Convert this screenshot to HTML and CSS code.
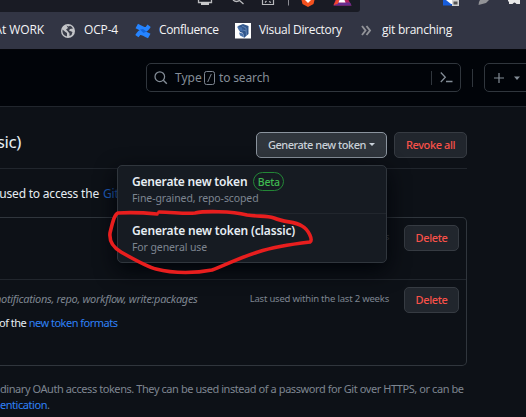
FILE: index.html
```html
<!DOCTYPE html>
<html lang="en">
<head>
<meta charset="utf-8">
<title>Personal access tokens (classic)</title>
<link rel="stylesheet" href="styles.css">
</head>
<body>
<div class="toolbar">
  <div class="address">
    <svg class="tool-icons" width="170" height="12" viewBox="190 0 170 12">
      <path d="M198.500 0v2.500h13V0" fill="none" stroke="#b9babd" stroke-width="1.300"/><path d="M201 2h8v3h-8z" fill="#c8c9cb"/>
      <path d="M233 0q3.500 3 7 0M239.500 0.500l4 3.500" fill="none" stroke="#b9babd" stroke-width="1.300"/>
      <path d="M262.500 0v4.500h11V0M265 2.500l1.500-1.500M269 1.500l2 1" fill="none" stroke="#b9babd" stroke-width="1.200"/>
      <path d="M288.500 0v5.500" stroke="#8b8c93"/>
      <path d="M301.500 0h13l-1 4-5.500 3-5.500-3z" fill="#f4511e"/><path d="M305 0h6l-3 3z" fill="#fff"/>
      <path d="M335.500 0h13l3 5.500h-18z" fill="#b6245f"/><path d="M333.500 5.500l3.500-3h13l1.500 3z" fill="#662d91"/><path d="M333.500 5l3-5h3l-2 4z" fill="#f4472c"/><path d="M339.500 0h5l1 2.500h-7z" fill="#fff"/>
    </svg>
  </div>
  <svg class="ext-icons" width="166" height="12" viewBox="360 0 166 12">
    <path d="M443 0h15v5.500h-15z" fill="#175ddc"/><path d="M446 0h7v4h-2z" fill="#fff"/><path d="M452 0h7v6h-7z" fill="#d2d2d2"/><path d="M453.500 1.500h4v3h-4z" fill="#555"/>
    <path d="M480 0h9l-3 3-7.500 2 .5-3z" fill="#929397"/>
    <path d="M508 0h12v4h-3.500q-2-3-4 0H509V1.500h-1z" fill="#e8e8e8"/>
  </svg>
</div>
<nav class="bookmarks">
  <span class="bm bm-work">At WORK</span>
  <svg class="i-globe" width="14" height="14" viewBox="0 0 14 14"><circle cx="7" cy="7" r="7" fill="#c3c4c8"/><path d="M1.500 5.500l3 2.500 1.500 1v3.500Q2 11.500 1.500 8zM5.500 1.500l2 1 1.500-.7q2 .7 3 2.700l-3 .5-1 1.500 3.500 1.500-1 3-2 1v-2.500L6.500 7 5 5.500 7 4z" fill="#3b3e4b"/></svg>
  <span class="bm bm-ocp">OCP-4</span>
  <svg class="i-conf" width="16" height="16" viewBox="0 0 16 16"><path d="M.3 12q4-7 8.500-4.500L15.500 10.700 13 15.300Q6 11.500 5.300 12L3.500 14.200z" fill="#2684ff"/><path d="M15.700 4q-4 7-8.500 4.500L.5 5.300 3 .7Q10 4.500 10.700 4l1.800-2.500z" fill="#2684ff"/><path d="M5 6.500l3-.5 3.500 2.500-3 1.500z" fill="#1265dc"/></svg>
  <span class="bm bm-conf">Confluence</span>
  <svg class="i-vis" width="16" height="16" viewBox="0 0 16 16"><path d="M0 0h16v15.500H0z" fill="#fff"/><path d="M3 3l5-2 5.500 2v8L9 15l-1-5-3-1z" fill="#31568c"/><path d="M2 3.500l5 1 1 4-4-1zM4 9.500l4 1 1 4-4-2z" fill="#4871ab"/><path d="M7 3l4 2 .5 8M8 7l3 1" fill="none" stroke="#7d9dc7" stroke-width=".6"/></svg>
  <span class="bm bm-vis">Visual Directory</span>
  <svg class="i-chev" width="11" height="11" viewBox="0 0 11 11"><path d="M1 1l3.500 4.500L1 10M5.500 1L9 5.500 5.500 10" fill="none" stroke="#929399" stroke-width="1.900"/></svg>
  <span class="bm bm-git">git branching</span>
</nav>
<header class="header">
  <div class="search">
    <svg class="i-search" width="14" height="14" viewBox="0 0 14 14"><circle cx="5.800" cy="5.700" r="4.800" fill="none" stroke="#848d97" stroke-width="1.250"/><path d="M9.300 9.300l3.500 3.500" stroke="#848d97" stroke-width="1.400"/></svg>
    <span class="ph ph-type">Type</span>
    <svg class="i-key" width="11" height="14" viewBox="0 0 11 14"><rect x=".5" y=".5" width="10" height="13" rx="2" fill="none" stroke="#7d8590"/><path d="M3.700 11L7.300 3" stroke="#7d8590"/></svg>
    <span class="ph ph-to">to search</span>
    <span class="search-sep"></span>
    <svg class="i-term" width="13" height="11" viewBox="0 0 13 11"><path d="M.8.500L5.300 5.300.8 10M6 9.500h6.500" fill="none" stroke="#848d97" stroke-width="1.300"/></svg>
  </div>
  <span class="header-sep"></span>
  <div class="create">
    <svg width="32" height="12" viewBox="0 0 32 12"><path d="M6 1v10M1 6h10" stroke="#848d97" stroke-width="1.200"/><path d="M21 4.500h6L24 8z" fill="#848d97"/></svg>
  </div>
</header>
<main class="page">
  <div class="title-row">
    <div class="title"><span>sic)</span></div>
    <div class="btn btn-gen"><span>Generate new token</span><i class="caret"></i></div>
    <div class="btn btn-revoke"><span>Revoke all</span></div>
  </div>
  <div class="intro"><span class="intro-a">used to access the</span><span class="intro-b">Git</span></div>
  <section class="tokens">
    <div class="row row-one"><span class="used used-s">s</span><div class="btn btn-delete"><span>Delete</span></div></div>
    <div class="row row-two">
      <div class="details">
        <div class="scopes">notifications, repo, workflow, write:packages</div>
        <div class="formats"><span class="of">of the</span> <span class="link">new token formats</span></div>
      </div>
      <span class="used">Last used within the last 2 weeks</span>
      <div class="btn btn-delete"><span>Delete</span></div>
    </div>
  </section>
  <footer class="note">
    <div class="note-line">dinary OAuth access tokens. They can be used instead of a password for Git over HTTPS, or can be</div>
    <div class="note-line note-b"><span class="link">entication</span>.</div>
  </footer>
</main>
<div class="menu">
  <div class="item item-one">
    <div class="item-head"><span class="item-title">Generate new token</span><span class="beta">Beta</span></div>
    <div class="item-sub">Fine-grained, repo-scoped</div>
  </div>
  <div class="item item-two">
    <div class="item-head"><span class="item-title title-classic">Generate new token (classic)</span></div>
    <div class="item-sub">For general use</div>
  </div>
</div>
<svg class="scribble" width="210" height="68" viewBox="105 207 210 68"><path d="M157 214Q136 212 118 213C114 214 112 225 110 233C109 242 114 248 121 252C135 260 147 267 156 269C175 274 197 273 212 270C227 264 242 257 258 252C276 246 293 244 310 242C313 240 309 230 302 226C294 221 286 223 274 218C266 215 259 217 247 215C231 211 204 211 195 213C184 214 172 212 159 212" fill="none" stroke="#e81e1e" stroke-width="3.600" stroke-linecap="round" stroke-linejoin="round"/></svg>
</body>
</html>
```
FILE: styles.css
```css
* { box-sizing: border-box; }
body { margin: 0; width: 526px; height: 417px; overflow: hidden; position: relative; background: #0d1117; color: #e6edf3; font-family: "Noto Sans", sans-serif; font-size: 11px; white-space: nowrap; }
svg { display: block; flex: none; }
span { flex: none; }
.toolbar { display: flex; height: 12px; background: #323544; }
.address { display: flex; justify-content: flex-end; width: 360px; height: 12px; background: #191b24; border-bottom-right-radius: 3px; }
.bookmarks { display: flex; align-items: center; height: 38px; background: #323544; border-bottom: 1px solid #05060a; font-family: "Open Sans", sans-serif; font-size: 12px; color: #f4f4f6; }
.bm { line-height: 16px; margin-top: -1px; }
.bm-work { display: flex; justify-content: flex-end; width: 44px; letter-spacing: -.1px; }
.i-globe { margin-left: 17px; }
.bm-ocp { margin-left: 9px; width: 51px; letter-spacing: -.15px; }
.bm-conf { margin-left: 8px; width: 76px; letter-spacing: -.35px; }
.bm-vis { margin-left: 8px; width: 102px; letter-spacing: -.3px; }
.bm-git { margin-left: 10px; letter-spacing: -.25px; }
.header { display: flex; align-items: flex-start; height: 57px; padding: 13px 0 0 146px; background: #010409; border-bottom: 1px solid #21262d; }
.search { display: flex; align-items: center; flex: none; width: 315px; height: 29px; border: 1px solid #30363d; border-radius: 5px; }
.i-search { margin-left: 7px; }
.ph { color: #848d97; font-size: 12px; line-height: 16px; margin-top: 1px; }
.ph-type { margin-left: 7px; width: 29px; }
.ph-to { margin-left: 4px; width: 55px; letter-spacing: -.15px; }
.search-sep { width: 1px; height: 14px; margin-left: auto; background: #30363d; }
.i-term { margin: 0 7px 0 8px; }
.header-sep { width: 1px; height: 18px; margin: 6px 0 0 11px; background: #30363d; }
.create { display: flex; align-items: center; width: 60px; flex: none; height: 29px; margin-left: 11px; padding-left: 8px; border: 1px solid #30363d; border-radius: 5px; }
.page { display: flex; flex-direction: column; width: 467px; padding-top: 25px; }
.title-row { display: flex; height: 37px; border-bottom: 1px solid #21262d; }
.title { display: flex; justify-content: flex-end; width: 21px; margin-right: 235px; font-size: 17px; line-height: 20px; letter-spacing: -.4px; }
.btn { display: flex; align-items: center; justify-content: center; flex: none; height: 26px; border: 1px solid #363b42; border-radius: 5px; background: #21262d; color: #f85149; font-size: 11px; font-weight: 500; letter-spacing: -.4px; line-height: 15px; padding-bottom: 1px; }
.btn-gen { width: 131px; background: #30363d; border-color: #8b949e; color: #c9d1d9; gap: 3px; letter-spacing: -.48px; }
.caret { border: 3px solid transparent; border-top-color: #c9d1d9; border-bottom: 0; }
.btn-revoke { width: 73px; margin-left: 7px; }
.intro { display: flex; height: 48px; padding-top: 17px; font-size: 12px; line-height: 16px; letter-spacing: -.2px; }
.intro-a { display: flex; justify-content: flex-end; width: 99px; margin-right: 4px; }
.intro-b { color: #1f5fbf; }
.tokens { height: 149px; border: 1px solid #30363d; border-left: 0; border-radius: 0 5px 5px 0; }
.row { display: flex; justify-content: flex-end; padding: 8px 7px 0 0; }
.row-one { height: 62px; border-bottom: 1px solid #21262d; }
.row .btn { margin-top: -1px; }
.used { color: #7d8590; font-size: 9.500px; line-height: 21px; letter-spacing: -.2px; }
.used-s { color: #4b5158; }
.btn-delete { width: 55px; margin-left: 15px; }
.details { width: 200px; margin-right: auto; }
.scopes { margin-left: -5px; color: #7d8590; font-size: 11px; font-style: italic; line-height: 22px; letter-spacing: -.31px; }
.formats { margin-left: -1px; margin-top: 3px; line-height: 20px; letter-spacing: -.5px; }
.link { color: #2f81f7; }
.note { padding-top: 15px; color: #7d8590; }
.note-line { height: 16px; line-height: 16px; letter-spacing: -.43px; }
.note-b { letter-spacing: -.45px; }
.menu { position: absolute; left: 117px; top: 165px; width: 270px; height: 98px; border: 1px solid #30363d; border-radius: 5px; background: #161b22; box-shadow: 0 7px 21px #010409; }
.item { padding-left: 14px; height: 48px; }
.item-one { padding-top: 6px; border-bottom: 1px solid #21262d; }
.item-two { padding-top: 7px; }
.item-head { display: flex; align-items: center; height: 19px; }
.item-title { font-size: 12px; font-weight: 600; line-height: 18px; letter-spacing: -.2px; }
.title-classic { letter-spacing: -.16px; }
.beta { display: flex; align-items: center; justify-content: center; width: 31px; height: 19px; margin-left: 6px; border: 1px solid #238636; border-radius: 10px; color: #3fb950; font-size: 10.500px; font-weight: 500; letter-spacing: -.2px; }
.item-sub { color: #7d8590; font-size: 10.500px; line-height: 15px; letter-spacing: -.1px; }
.scribble { position: absolute; left: 105px; top: 207px; }
```
